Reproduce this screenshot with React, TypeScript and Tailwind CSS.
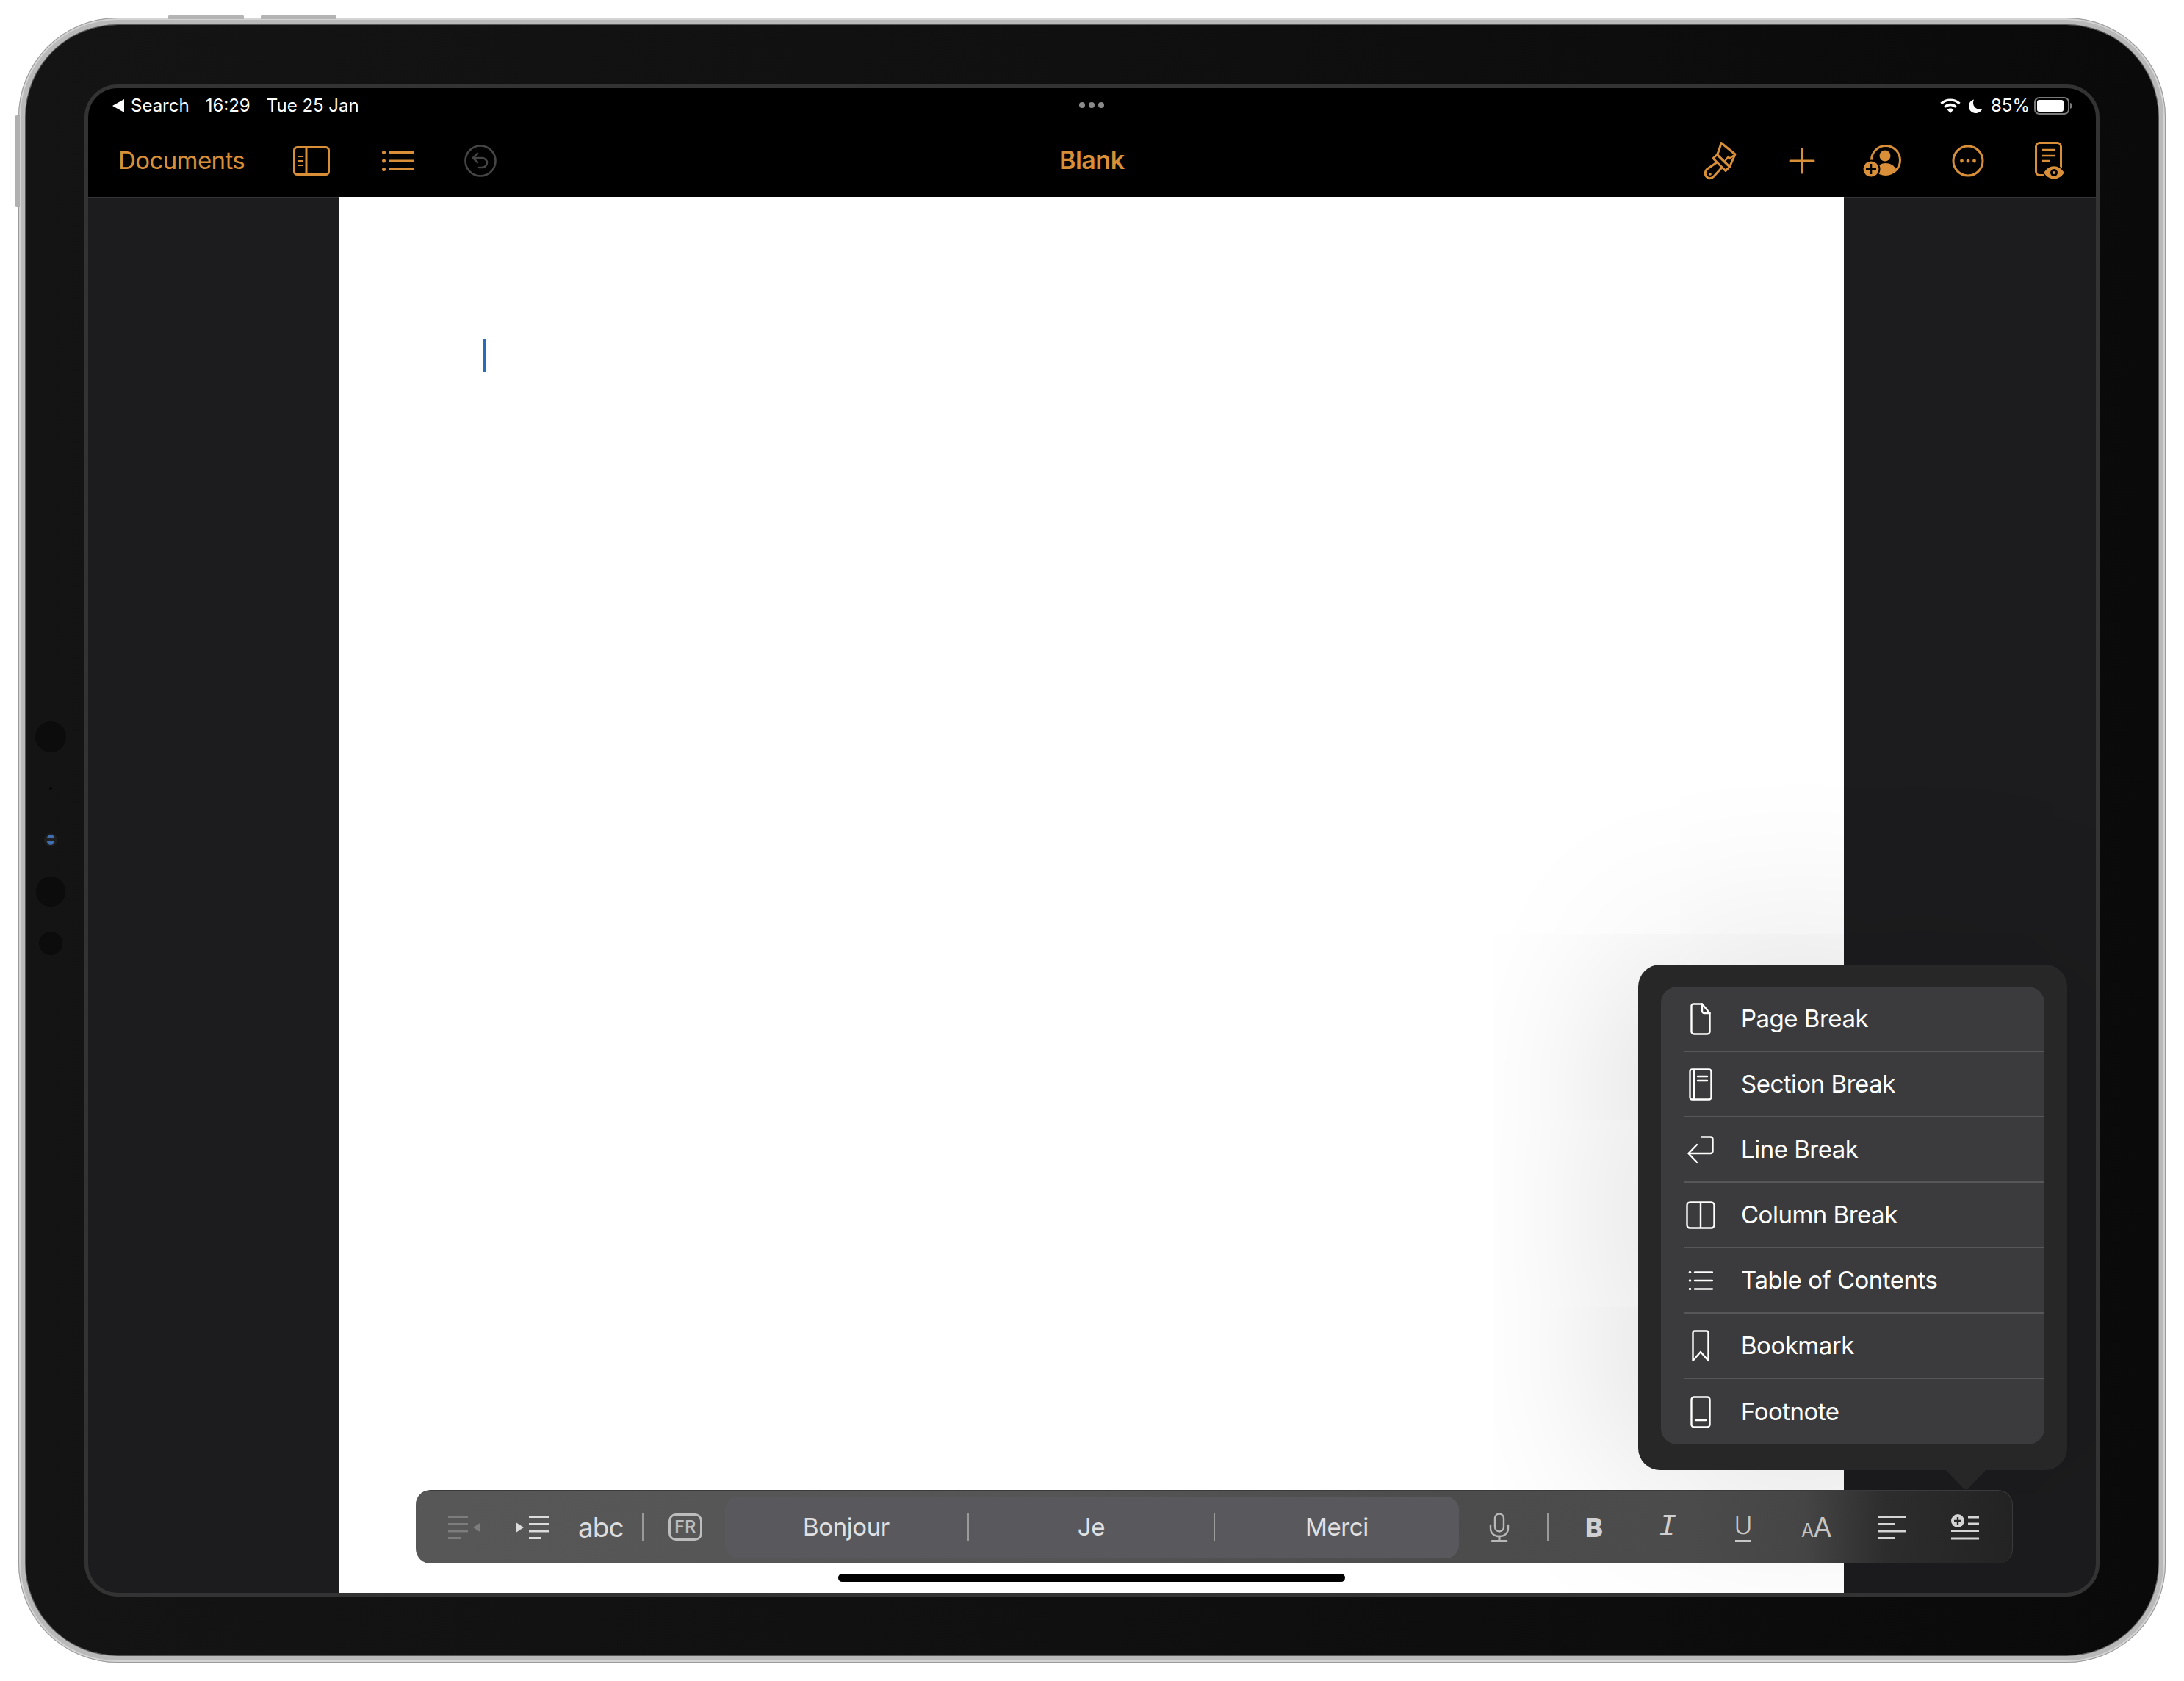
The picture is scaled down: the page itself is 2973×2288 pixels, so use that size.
const O = "#d98f37";

function SidebarIcon() {
  return (
    <svg width="50" height="40" viewBox="0 0 50 40" fill="none" stroke={O} strokeWidth="3">
      <rect x="1.5" y="1.5" width="47" height="37" rx="4" />
      <path d="M18 2v36" />
      <path d="M6 14h7M6 20h7M6 26h7" strokeWidth="2" />
    </svg>
  );
}
function ListIcon() {
  return (
    <svg width="43" height="30" viewBox="0 0 43 30" fill="none" stroke={O} strokeWidth="3">
      <circle cx="2.5" cy="3.5" r="2.5" fill={O} stroke="none" />
      <circle cx="2.5" cy="15" r="2.5" fill={O} stroke="none" />
      <circle cx="2.5" cy="26.5" r="2.5" fill={O} stroke="none" />
      <path d="M10 3.5h33M10 15h33M10 26.5h33" />
    </svg>
  );
}
function UndoIcon() {
  return (
    <svg width="44" height="44" viewBox="0 0 44 44" fill="none" stroke="#454545" strokeWidth="2.6" strokeLinecap="round" strokeLinejoin="round">
      <circle cx="22" cy="22" r="20.5" />
      <path d="M18 12l-6 6 6 6" />
      <path d="M12 18h12c4 0 7 3 7 6.5S28 31 24 31h-4" />
    </svg>
  );
}
function BrushIcon() {
  return (
    <svg width="46" height="54" viewBox="16 12 46 54" fill="none" stroke={O} strokeWidth="3" strokeLinejoin="round" strokeLinecap="round">
      <path d="M39 14.500 58 30 50.500 47 33.500 30.500C36 25.500 37.500 20 39 14.500Z" />
      <path d="M28 35.500 33.500 30.500 50.500 47 45 52.500Z" />
      <path d="M33 41 20 50c-3.500 3-3.500 8-1 10.500 2.500 3 7 3 10-.5L39 49" />
      <path d="M57 31 50 36 49 33 45 38" strokeWidth="2.400" />
      <circle cx="24" cy="57" r="1.800" fill={O} stroke="none" />
    </svg>
  );
}
function PlusIcon() {
  return (
    <svg width="36" height="36" viewBox="0 0 36 36" fill="none" stroke={O} strokeWidth="3" strokeLinecap="round">
      <path d="M18 2v32M2 18h32" />
    </svg>
  );
}
function CollabIcon() {
  return (
    <svg width="52" height="44" viewBox="0 0 52 44">
      <circle cx="31" cy="21" r="19.500" fill="none" stroke={O} strokeWidth="3" />
      <circle cx="30" cy="15" r="7.500" fill={O} />
      <path d="M18 34c2-6 7-9 13-9s11 3 14 8c-3 6-8 8-14 8-5 0-10-2-13-7Z" fill={O} />
      <circle cx="11" cy="33" r="12.500" fill="#000" />
      <circle cx="11" cy="33" r="10.500" fill={O} />
      <path d="M11 26v14M4 33h14" stroke="#000" strokeWidth="2.600" />
    </svg>
  );
}
function MoreIcon() {
  return (
    <svg width="44" height="44" viewBox="0 0 44 44" fill="none">
      <circle cx="22" cy="22" r="20" stroke={O} strokeWidth="3" />
      <circle cx="13.500" cy="22" r="2.400" fill={O} />
      <circle cx="22" cy="22" r="2.400" fill={O} />
      <circle cx="30.500" cy="22" r="2.400" fill={O} />
    </svg>
  );
}
function ReviewIcon() {
  return (
    <svg width="42" height="52" viewBox="0 0 42 52" fill="none">
      <rect x="1.500" y="1.500" width="34" height="44" rx="5" stroke={O} strokeWidth="3" />
      <path d="M10 11h18M10 19h18M10 26h10" stroke={O} strokeWidth="2.600" />
      <path d="M11 42c4-6 9-9.500 15-9.500s11 3.500 15 9.500c-4 6-9 9.500-15 9.500s-11-3.500-15-9.500Z" fill={O} stroke="#000" strokeWidth="1.500" />
      <circle cx="26" cy="42" r="5" fill="#000" />
      <circle cx="26" cy="42" r="2" fill={O} />
    </svg>
  );
}
function Wifi() {
  return (
    <svg width="28" height="20" viewBox="0 0 28 20" fill="none" stroke="#fff" strokeWidth="3.400">
      <path d="M1.500 7C8.500 0.500 19.500 0.500 26.500 7" />
      <path d="M6.500 11.500c4.500-4 10.500-4 15 0" />
      <path d="M14 20l-4.500-5c2.500-2 6.500-2 9 0Z" fill="#fff" stroke="none" />
    </svg>
  );
}
function Moon() {
  return (
    <svg width="19" height="19" viewBox="0 0 19 19">
      <path d="M7 0.500C2.800 1.500 0 5 0 9.500 0 15 4.200 19 9.500 19c4 0 7.500-2.500 9-6-1 .5-2.200.7-3.300.7C9.800 13.700 6 9.800 6 5c0-1.700.3-3.200 1-4.500Z" fill="#fff" />
    </svg>
  );
}
function Battery() {
  return (
    <svg width="52" height="24" viewBox="0 0 52 24">
      <rect x="1" y="1" width="46" height="22" rx="6" fill="none" stroke="#7a7a7a" strokeWidth="2" />
      <rect x="4" y="4" width="36" height="16" rx="3" fill="#fff" />
      <path d="M49 8c2 .6 3 2.200 3 4s-1 3.400-3 4Z" fill="#7a7a7a" />
    </svg>
  );
}

function OutdentIcon() {
  return (
    <svg width="44" height="32" viewBox="0 0 44 32" fill="#7d7d7d" className="block">
      <rect x="0" y="0" width="27" height="3" />
      <rect x="0" y="10" width="27" height="3" />
      <rect x="0" y="19.500" width="27" height="3" />
      <rect x="0" y="29" width="17" height="3" />
      <path d="M44 9.500v13L34 16Z" />
    </svg>
  );
}
function IndentIcon() {
  return (
    <svg width="44" height="32" viewBox="0 0 44 32" fill="#dcdcdc" className="block">
      <rect x="17" y="0" width="27" height="3" />
      <rect x="17" y="10" width="27" height="3" />
      <rect x="17" y="19.500" width="27" height="3" />
      <rect x="17" y="29" width="17" height="3" />
      <path d="M0 9.500v13L10 16Z" />
    </svg>
  );
}
function MicIcon() {
  return (
    <svg width="28" height="40" viewBox="0 0 28 40" fill="none" stroke="#b8b8b8" strokeWidth="2.400" strokeLinecap="round">
      <rect x="8" y="1.500" width="12" height="24" rx="6" />
      <path d="M2 17v4c0 7 5 11 12 11s12-4 12-11v-4" />
      <path d="M14 32v6M4 38.500h20" strokeWidth="3" />
    </svg>
  );
}
function AlignIcon() {
  return (
    <svg width="38" height="32" viewBox="0 0 38 32" fill="#d4d4d4" className="block">
      <rect x="0" y="0" width="38" height="3" />
      <rect x="0" y="10" width="24" height="3" />
      <rect x="0" y="19.500" width="38" height="3" />
      <rect x="0" y="29" width="24" height="3" />
    </svg>
  );
}
function InsertIcon() {
  return (
    <svg width="38" height="35" viewBox="0 0 38 35">
      <circle cx="9" cy="9" r="9" fill="#d4d4d4" />
      <path d="M9 4v10M4 9h10" stroke="#2a2a2a" strokeWidth="2.400" />
      <path d="M23 4h15M23 13h15M0 22.500h38M0 33h38" stroke="#d4d4d4" strokeWidth="3" />
    </svg>
  );
}

const S = { fill: "none", stroke: "#fff", strokeWidth: 2.400, strokeLinejoin: "round" as const, strokeLinecap: "round" as const };

const menu: { label: string; icon: React.ReactNode }[] = [
  {
    label: "Page Break",
    icon: (
      <svg width="28" height="44" viewBox="0 0 28 44" {...S}>
        <path d="M4 1.500h12L26.500 14v25a3.500 3.500 0 0 1-3.500 3.500H5A3.500 3.500 0 0 1 1.500 39V4A2.500 2.500 0 0 1 4 1.500Z" />
        <path d="M16 1.500V11a3 3 0 0 0 3 3h7.500" />
      </svg>
    ),
  },
  {
    label: "Section Break",
    icon: (
      <svg width="32" height="44" viewBox="0 0 32 44" {...S}>
        <rect x="1.500" y="1.500" width="29" height="41" rx="3" />
        <path d="M7 2v40" />
        <path d="M12 11h13M12 17h13" />
      </svg>
    ),
  },
  {
    label: "Line Break",
    icon: (
      <svg width="36" height="38" viewBox="0 0 36 38" {...S}>
        <path d="M19 1.500h12.500a3 3 0 0 1 3 3V21a3 3 0 0 1-3 3H2" />
        <path d="M13 12 1.500 24 13 36" />
      </svg>
    ),
  },
  {
    label: "Column Break",
    icon: (
      <svg width="40" height="38" viewBox="0 0 40 38" {...S}>
        <rect x="1.500" y="1.500" width="37" height="35" rx="4" />
        <path d="M20 2v34" />
      </svg>
    ),
  },
  {
    label: "Table of Contents",
    icon: (
      <svg width="34" height="30" viewBox="0 0 34 30" {...S}>
        <circle cx="2.500" cy="3.500" r="1.800" fill="#fff" stroke="none" />
        <circle cx="2.500" cy="15" r="1.800" fill="#fff" stroke="none" />
        <circle cx="2.500" cy="26.500" r="1.800" fill="#fff" stroke="none" />
        <path d="M9 3.500h24M9 15h24M9 26.500h24" />
      </svg>
    ),
  },
  {
    label: "Bookmark",
    icon: (
      <svg width="24" height="44" viewBox="0 0 24 44" {...S}>
        <path d="M4 1.500h16a2.500 2.500 0 0 1 2.500 2.500v38L12 30 1.500 42V4A2.500 2.500 0 0 1 4 1.500Z" />
      </svg>
    ),
  },
  {
    label: "Footnote",
    icon: (
      <svg width="28" height="44" viewBox="0 0 28 44" {...S}>
        <rect x="1.500" y="1.500" width="25" height="41" rx="3.500" />
        <path d="M7 33h14" />
      </svg>
    ),
  },
];

function Sep() {
  return <div className="w-[2px] h-[38px] bg-[#9a9a9a]" />;
}

export default function App() {
  return (
    <div className="w-[2973px] h-[2288px] bg-white pl-[25px] pt-[24px] font-['Inter','Noto_Sans',sans-serif]">
      <div className="relative w-[2923px] h-[2239px]">
        {/* Hardware buttons */}
        <div className="absolute left-[204px] -top-[4px] w-[103px] h-[6px] rounded-t-[3px] bg-[#b4b4b4]" />
        <div className="absolute left-[330px] -top-[4px] w-[103px] h-[6px] rounded-t-[3px] bg-[#b4b4b4]" />
        <div className="absolute -left-[5px] top-[133px] w-[7px] h-[125px] rounded-l-[3px] bg-[#b0b0b0]" />

        <div className="h-full rounded-[135px] p-[10px] bg-[#b9b9b9] shadow-[inset_0_0_0_1px_#9a9a9a,inset_0_0_0_3px_#d4d4d4]">
          <div className="relative h-full rounded-[125px] pt-[81px] pl-[80px] pr-[81px] pb-[80px] bg-[linear-gradient(90deg,#141414,#101010_50%,#0a0a0a)] shadow-[0_0_0_1px_#555]">
            {/* Side sensors */}
            <div className="absolute left-[13px] top-[948px] w-[42px] h-[42px] rounded-full bg-[#0c0c0c]" />
            <div className="absolute left-[32px] top-[1037px] w-[4px] h-[4px] rounded-full bg-[#050505]" />
            <svg width="18" height="18" viewBox="0 0 18 18" className="absolute left-[25px] top-[1100px]">
              <circle cx="9" cy="9" r="9" fill="#202020" />
              <path d="M4 7a5 5 0 0 1 10 0Z" fill="#3f6fb0" />
              <path d="M4 11a5 5 0 0 0 10 0Z" fill="#3f6fb0" />
            </svg>
            <div className="absolute left-[14px] top-[1159px] w-[40px] h-[41px] rounded-full bg-[#0c0c0c]" />
            <div className="absolute left-[18px] top-[1234px] w-[32px] h-[32px] rounded-full bg-[#0c0c0c]" />

            {/* Screen */}
            <div className="relative flex flex-col w-[2743px] h-[2058px] border-[5px] border-[#333333] rounded-[45px] overflow-hidden bg-[#1c1c1e]">
              {/* Status + nav */}
              <div className="shrink-0 h-[148px] bg-black">
                <div className="relative flex items-center justify-between h-[46px] pt-[2px] pl-[33px] pr-[32px] text-[24px] text-white">
                  <div className="flex items-center">
                    <svg width="16" height="18" viewBox="0 0 16 18" className="mr-[9px]">
                      <path d="M16 0v18L0 9Z" fill="#fff" />
                    </svg>
                    <span>Search</span>
                    <span className="ml-[22px]">16:29</span>
                    <span className="ml-[22px]">Tue 25 Jan</span>
                  </div>
                  <div className="absolute left-[1349px] top-[19px] flex gap-[5px]">
                    <div className="w-[8px] h-[8px] rounded-full bg-[#8a8a8a]" />
                    <div className="w-[8px] h-[8px] rounded-full bg-[#8a8a8a]" />
                    <div className="w-[8px] h-[8px] rounded-full bg-[#8a8a8a]" />
                  </div>
                  <div className="flex items-center">
                    <Wifi />
                    <div className="ml-[11px]"><Moon /></div>
                    <span className="ml-[11px]">85%</span>
                    <div className="ml-[6px]"><Battery /></div>
                  </div>
                </div>
                <div className="relative flex items-center justify-between h-[102px] pt-[3px] pl-[41px] pr-[41px] text-[33px] text-[#d98f37]">
                  <div className="flex items-center">
                    <span className="tracking-[-0.6px]">Documents</span>
                    <div className="ml-[66px]"><SidebarIcon /></div>
                    <div className="ml-[71px]"><ListIcon /></div>
                    <div className="ml-[69px]"><UndoIcon /></div>
                  </div>
                  <div className="absolute left-[1322px] top-[30px] font-semibold text-[34px] leading-[44px] tracking-[-0.5px]">Blank</div>
                  <div className="flex items-center">
                    <BrushIcon />
                    <div className="ml-[69px]"><PlusIcon /></div>
                    <div className="ml-[65px]"><CollabIcon /></div>
                    <div className="ml-[69px]"><MoreIcon /></div>
                    <div className="ml-[69px]"><ReviewIcon /></div>
                  </div>
                </div>
              </div>

              {/* Document area */}
              <div className="flex flex-1 border-t border-t-[#333333]">
                <div className="w-[342px] shrink-0" />
                <div className="w-[2048px] shrink-0 bg-white pl-[196px] pt-[194px] -mt-px">
                  <div className="w-[3px] h-[44px] bg-[#2b6cb8]" />
                </div>
                <div className="flex-1" />
              </div>

              {/* Popover */}
              <div className="absolute left-[2110px] top-[1193px] w-[584px] h-[688px] rounded-[30px] bg-[#272727] p-[31px] pt-[30px] shadow-[0_0_520px_rgba(0,0,0,0.2)]">
                <div className="rounded-[22px] bg-[#3b3b3d] text-white text-[33px] tracking-[-0.5px] overflow-hidden">
                  {menu.map((m, i) => (
                    <div key={m.label} className="flex items-center h-[89px] pl-[32px]">
                      <div className={`flex items-center h-full flex-1 ${i < menu.length - 1 ? "border-b-2 border-b-[#57575a]" : ""}`}>
                        <div className="w-[44px] flex justify-center shrink-0">{m.icon}</div>
                        <span className="ml-[33px]">{m.label}</span>
                      </div>
                    </div>
                  ))}
                </div>
              </div>
              <svg width="54" height="26" viewBox="0 0 54 26" className="absolute left-[2529px] top-[1881px]">
                <path d="M0 0h54L31 24c-2 2-6 2-8 0Z" fill="#272727" />
              </svg>

              {/* Keyboard shortcut bar */}
              <div className="absolute left-[446px] top-[1908px] w-[2174px] h-[100px] rounded-[20px] border-r border-t border-r-[#3a3a3a] border-t-[#3a3a3a] bg-[linear-gradient(90deg,#575757_0%,#555555_40%,#4c4c4c_65%,#4b4b4b_80%,#454545_87%,#2d2d2d_92%,#232323_100%)] flex items-center pl-[44px] text-[#dcdcdc]">
                <OutdentIcon />
                <div className="ml-[49px]"><IndentIcon /></div>
                <span className="ml-[40px] text-[37px] tracking-[-1px] w-[60px]">abc</span>
                <div className="ml-[27px]"><Sep /></div>
                <div className="ml-[34px] w-[46px] h-[37px] rounded-[10px] border-[3px] border-[#bdbdbd] flex items-center justify-center text-[23px] font-semibold text-[#bdbdbd] tracking-[0.5px]">FR</div>
                <div className="ml-[31px] flex items-center w-[999px] h-[84px] rounded-[18px] bg-[#59595d] text-[33px] tracking-[-0.4px] text-[#e0e0e0]">
                  <div className="w-[330px] flex justify-center">Bonjour</div>
                  <Sep />
                  <div className="w-[333px] flex justify-center">Je</div>
                  <Sep />
                  <div className="flex-1 flex justify-center">Merci</div>
                </div>
                <div className="ml-[41px]"><MicIcon /></div>
                <div className="ml-[51px]"><Sep /></div>
                <span className="ml-[50px] w-[24px] text-[36px] font-extrabold text-[#d0d0d0] leading-none">B</span>
                <span className="ml-[76px] w-[24px] text-[40px] italic text-[#cfcfcf] font-['Liberation_Mono',monospace] leading-none">I</span>
                <span className="ml-[80px] w-[22px] text-[34px] font-light text-[#c8c8c8] leading-none border-b-[3px] border-b-[#c8c8c8] pb-[3px] flex justify-center">U</span>
                <span className="ml-[68px] w-[44px] flex items-baseline text-[#c4c4c4] leading-none tracking-[-1px]">
                  <span className="text-[25px]">A</span>
                  <span className="text-[37px]">A</span>
                </span>
                <div className="ml-[60px]"><AlignIcon /></div>
                <div className="ml-[62px]"><InsertIcon /></div>
              </div>

              {/* Home indicator */}
              <div className="absolute left-[1021px] top-[2022px] w-[690px] h-[11px] rounded-full bg-black" />
            </div>
          </div>
        </div>
      </div>
    </div>
  );
}
